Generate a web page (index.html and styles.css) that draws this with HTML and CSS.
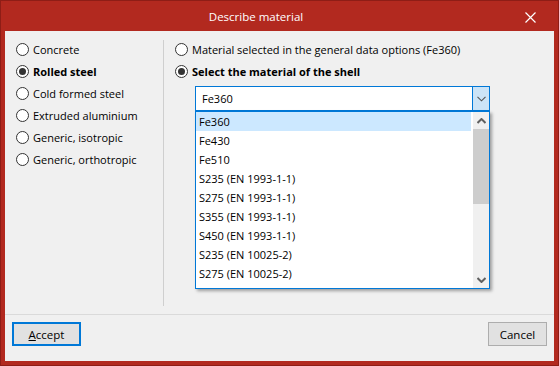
FILE: index.html
```html
<!DOCTYPE html>
<html lang="en">
<head>
    <meta charset="UTF-8">
    <title>Describe material</title>
    <link rel="stylesheet" href="styles.css">
</head>
<body>
    <div class="window">
        <div class="titlebar">
            <span class="title">Describe material</span>
            <span class="close">
                <svg width="11" height="11" viewBox="0 0 11 11"><path d="M0.5 0.5 L10.5 10.5 M10.5 0.5 L0.5 10.5" stroke="#fff" stroke-width="1.2"/></svg>
            </span>
        </div>
        <div class="dialog">
            <div class="main">
                <div class="types">
                    <label class="radio"><span class="dot"></span>Concrete</label>
                    <label class="radio checked"><span class="dot"></span>Rolled steel</label>
                    <label class="radio"><span class="dot"></span>Cold formed steel</label>
                    <label class="radio"><span class="dot"></span>Extruded aluminium</label>
                    <label class="radio"><span class="dot"></span>Generic, isotropic</label>
                    <label class="radio"><span class="dot"></span>Generic, orthotropic</label>
                </div>
                <div class="sep"></div>
                <div class="material">
                    <label class="radio"><span class="dot"></span>Material selected in the general data options (Fe360)</label>
                    <label class="radio checked"><span class="dot"></span>Select the material of the shell</label>
                    <div class="combo-wrap">
                        <div class="combo">
                            <span class="combo-value">Fe360</span>
                            <span class="combo-btn">
                                <svg width="9" height="6" viewBox="0 0 9 6"><path d="M0.5 0.8 L4.5 4.8 L8.5 0.8" fill="none" stroke="#555" stroke-width="1.1"/></svg>
                            </span>
                        </div>
                        <div class="dropdown">
                            <div class="items">
                                <div class="item selected">Fe360</div>
                                <div class="item">Fe430</div>
                                <div class="item">Fe510</div>
                                <div class="item">S235 (EN 1993-1-1)</div>
                                <div class="item">S275 (EN 1993-1-1)</div>
                                <div class="item">S355 (EN 1993-1-1)</div>
                                <div class="item">S450 (EN 1993-1-1)</div>
                                <div class="item">S235 (EN 10025-2)</div>
                                <div class="item">S275 (EN 10025-2)</div>
                            </div>
                            <div class="scrollbar">
                                <span class="arrow">
                                    <svg width="9" height="6" viewBox="0 0 9 6"><path d="M0.5 5 L4.5 1 L8.5 5" fill="none" stroke="#606060" stroke-width="2"/></svg>
                                </span>
                                <span class="thumb"></span>
                                <span class="track"></span>
                                <span class="arrow">
                                    <svg width="9" height="6" viewBox="0 0 9 6"><path d="M0.5 1 L4.5 5 L8.5 1" fill="none" stroke="#606060" stroke-width="2"/></svg>
                                </span>
                            </div>
                        </div>
                    </div>
                </div>
            </div>
            <div class="footer">
                <button class="btn default"><u>A</u>ccept</button>
                <button class="btn">Cancel</button>
            </div>
        </div>
    </div>
</body>
</html>
```
FILE: styles.css
```css
body {
    margin: 0;
    font-family: "Open Sans", "Noto Sans", sans-serif;
    font-size: 11px;
    color: #000;
}
.window {
    width: 559px;
    height: 366px;
    box-sizing: border-box;
    background-color: #b2291f;
    border: 1px solid #8e1d16;
    padding: 0 4px 4px 4px;
    display: flex;
    flex-direction: column;
}
.titlebar {
    height: 30px;
    display: flex;
    align-items: center;
}
.title {
    flex: 1;
    text-align: center;
    color: #fff;
    font-size: 11.5px;
}
.close {
    width: 47px;
    height: 11px;
    margin-top: 3px;
    display: flex;
    justify-content: center;
}
.close svg {
    display: block;
}
.dialog {
    flex: 1;
    background-color: #f0f0f0;
    display: flex;
    flex-direction: column;
}
.main {
    flex: 1;
    display: flex;
}
.types {
    width: 147px;
    padding: 7px 0 0 11px;
}
.sep {
    width: 1px;
    background-color: #cfcfcf;
    margin: 9px 0 8px 0;
}
.material {
    flex: 1;
    padding: 7px 0 0 11px;
}
.radio {
    display: flex;
    align-items: center;
    height: 22px;
    white-space: nowrap;
}
.radio.checked {
    font-weight: bold;
}
.dot {
    width: 13px;
    height: 13px;
    box-sizing: border-box;
    border: 1px solid #333;
    border-radius: 50%;
    background-color: #fff;
    margin-right: 4px;
    display: flex;
    align-items: center;
    justify-content: center;
}
.checked .dot::after {
    content: "";
    width: 7px;
    height: 7px;
    border-radius: 50%;
    background-color: #333;
}
.combo-wrap {
    position: relative;
    width: 295px;
    margin: 4px 0 0 20px;
}
.combo {
    height: 25px;
    box-sizing: border-box;
    border: 1px solid #0078d7;
    background-color: #fff;
    display: flex;
}
.combo-value {
    flex: 1;
    padding-left: 6px;
    line-height: 23px;
}
.combo-btn {
    width: 16px;
    border-left: 1px solid #0078d7;
    background-color: #cce4f7;
    display: flex;
    align-items: center;
    justify-content: center;
}
.dropdown {
    position: absolute;
    top: 25px;
    left: 0;
    width: 295px;
    height: 178px;
    box-sizing: border-box;
    border: 1px solid #0078d7;
    background-color: #fff;
    box-shadow: 2px 2px 3px rgba(0, 0, 0, 0.35);
    display: flex;
    overflow: hidden;
}
.items {
    flex: 1;
}
.item {
    height: 19px;
    line-height: 19px;
    padding-left: 3px;
    margin-right: 2px;
}
.item.selected {
    background-color: #cce8ff;
}
.scrollbar {
    width: 16px;
    background-color: #f0f0f0;
    display: flex;
    flex-direction: column;
}
.arrow {
    height: 17px;
    display: flex;
    align-items: center;
    justify-content: center;
}
.thumb {
    height: 75px;
    background-color: #cdcdcd;
}
.track {
    flex: 1;
}
.footer {
    height: 39px;
    border-top: 1px solid #dadada;
    display: flex;
    justify-content: space-between;
    align-items: flex-start;
    padding: 7px 7px 0 7px;
    box-sizing: content-box;
}
.btn {
    height: 24px;
    font-family: inherit;
    font-size: 11.5px;
    color: #000;
    background-color: #e1e1e1;
    border: 1px solid #adadad;
    padding: 0;
    width: 59px;
}
.btn.default {
    width: 69px;
    border: 2px solid #0078d7;
}
```
